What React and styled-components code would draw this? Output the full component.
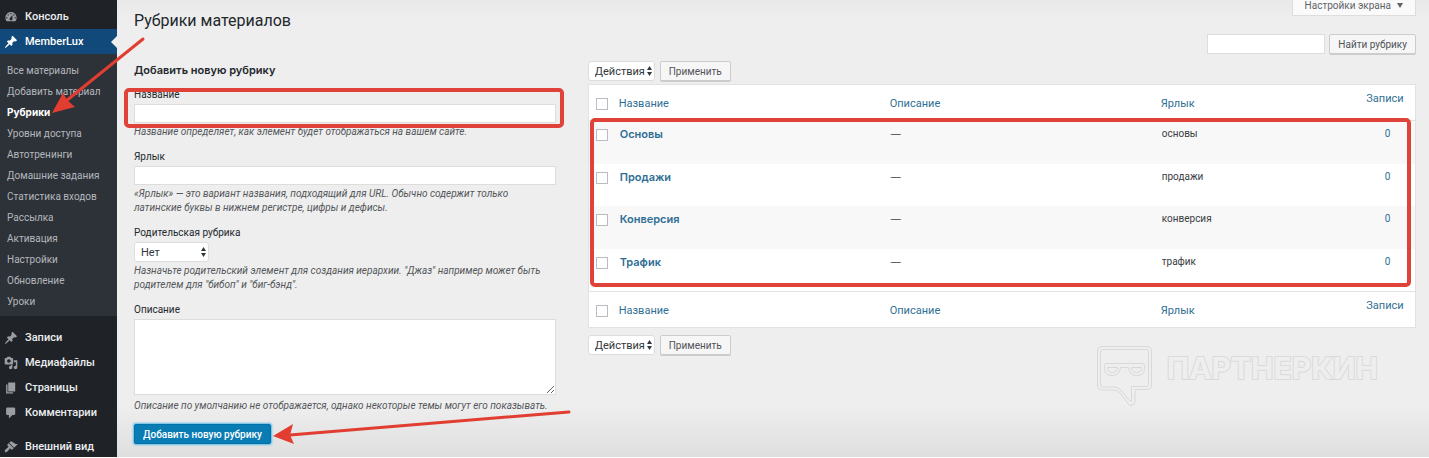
import React from "react";

import styled, { createGlobalStyle, css } from "styled-components";

const GlobalStyle = createGlobalStyle`
  * {
    box-sizing: border-box;
  }

  body {
    margin: 0;
    background: #fdfdfd;
    color: #3c4043;
    font-family: Roboto, "Liberation Sans", sans-serif;
    font-size: 10px;
    line-height: 14px;
  }

  a {
    color: #2f6f94;
    text-decoration: none;
  }

  button,
  input,
  select,
  textarea {
    margin: 0;
    color: inherit;
    font-family: inherit;
  }
`;

const boldFont = `Inter, "Liberation Sans", sans-serif`;

const Page = styled.div`
  position: relative;
  display: flex;
  height: 100vh;
  overflow: hidden;
  border-bottom: 1px solid #fdfdfd;
`;

/* sidebar */

const Sidebar = styled.nav`
  flex: 0 0 117px;
  padding-top: 4px;
  background: #1f2327;
`;

const MenuLink = styled.a`
  position: relative;
  display: flex;
  align-items: center;
  gap: 7px;
  height: 25px;
  margin-top: ${(props) => (props.$spaced ? "9px" : "0")};
  padding-left: 4px;
  background: ${(props) => (props.$active ? "#114a7a" : "transparent")};
  color: ${(props) => (props.$active ? "#fff" : "#eceef0")};
  font-size: 11px;
  font-weight: 500;

  svg {
    width: 14px;
    height: 14px;
    fill: ${(props) => (props.$active ? "#fff" : "#9a9ea2")};
  }

  ${(props) =>
    props.$active &&
    css`
      &::after {
        content: "";
        position: absolute;
        right: 0;
        border: solid 6px transparent;
        border-left-width: 0;
        border-right-color: #eee;
      }
    `}
`;

const SubMenu = styled.div`
  margin-bottom: 9px;
  padding: 6px 0 4px;
  background: #2d3138;
`;

const SubLink = styled.a`
  display: block;
  padding-left: 7px;
  color: ${(props) => (props.$current ? "#fff" : "#b4b8bd")};
  font-family: ${(props) => (props.$current ? boldFont : "inherit")};
  font-weight: ${(props) => (props.$current ? 700 : 400)};
  line-height: 21px;
  white-space: nowrap;
`;

/* content */

const Main = styled.main`
  flex: 1;
  min-width: 0;
  padding: 0 13px 0 17px;
  background: linear-gradient(
    #e9e9e9,
    #eee 20px,
    #eee calc(100% - 52px),
    #dfdfdf
  );
`;

const Header = styled.header`
  display: flex;
  justify-content: space-between;
  align-items: flex-start;
  height: 34px;
`;

const Title = styled.h1`
  margin: 0;
  padding-top: 11px;
  color: #23282d;
  font-size: 16px;
  font-weight: 400;
  line-height: 20px;
`;

const ScreenOptions = styled.button`
  display: flex;
  align-items: center;
  gap: 6px;
  height: 16px;
  padding: 0 12px 4px;
  border: solid 1px #ddd;
  border-top: 0;
  background: #fafafa;
  color: #5f6469;
  font-size: 10px;

  svg {
    width: 6px;
    height: 5px;
    fill: #5f6469;
  }
`;

const Search = styled.form`
  display: flex;
  justify-content: flex-end;
  gap: 4px;
  margin-bottom: 7px;
`;

const TextInput = styled.input`
  display: block;
  width: ${(props) => props.$width || "95%"};
  height: ${(props) => props.$height || "19px"};
  padding: 0 4px;
  border: solid 1px #ddd;
  background: #fff;
  font-size: 10px;
`;

const Button = styled.button`
  height: 20px;
  padding: 0 8px;
  border: solid 1px #ccc;
  border-radius: 2px;
  background: #f6f6f6;
  box-shadow: 0 1px 0 #ccc;
  color: #505459;
  font-size: 10px;
  white-space: nowrap;
`;

const PrimaryButton = styled(Button)`
  border-color: #0073aa;
  background: #0a7cb4;
  box-shadow: 0 0 2px 1px #5fb9e6;
  color: #fff;
  font-weight: 500;
`;

const Columns = styled.div`
  display: flex;
`;

const FormColumn = styled.section`
  flex: 0 0 35%;
  padding: 2px 5px 0 0;
`;

const ListColumn = styled.section`
  flex: 1;
  min-width: 0;
  padding-left: 5px;
`;

const FormTitle = styled.h2`
  margin: 0 0 11px;
  color: #23282d;
  font-family: ${boldFont};
  font-size: 11px;
  font-weight: 600;
  line-height: 14px;
`;

const Field = styled.div`
  position: relative;
  display: flex;
  flex-direction: column;
  align-items: flex-start;
  gap: 2px;
  margin-bottom: 11px;
`;

const Label = styled.label`
  color: #23282d;
`;

const Hint = styled.p`
  margin: 0;
  color: #54575b;
  font-style: italic;
`;

const TextArea = styled.textarea`
  display: block;
  width: 95%;
  height: 76px;
  margin-bottom: 2px;
  border: solid 1px #ddd;
  background: #fff;
  resize: both;
`;

const SelectBox = styled.span`
  position: relative;
  display: block;
  width: ${(props) => props.$width};

  select {
    display: block;
    width: 100%;
    height: 20px;
    padding: 0 6px;
    appearance: none;
    border: solid 1px #ddd;
    border-radius: 3px;
    background: #fff;
    color: #32373c;
    font-size: 11px;
  }

  svg {
    position: absolute;
    top: 5px;
    right: 3px;
    width: 5px;
    height: 10px;
    fill: #32373c;
    pointer-events: none;
  }
`;

const TableNav = styled.div`
  display: flex;
  align-items: center;
  gap: 5px;
  margin: ${(props) => (props.$bottom ? "7px 0 0" : "0 0 3px")};
`;

const TableBox = styled.div`
  position: relative;
`;

const Table = styled.table`
  width: 100%;
  border: solid 1px #e2e2e2;
  border-spacing: 0;
  background: #fff;
  table-layout: fixed;

  th,
  td {
    padding: 6px 8px 0;
    text-align: left;
    vertical-align: top;
    font-weight: 400;
  }

  thead th,
  tfoot th {
    height: 36px;
    padding-top: 12px;
    font-size: 11px;
  }

  thead th {
    border-bottom: solid 1px #e2e2e2;
  }

  tfoot th {
    border-top: solid 1px #e2e2e2;
  }

  thead th:first-child,
  tfoot th:first-child {
    padding-top: 11px;
  }

  thead th:last-child,
  tfoot th:last-child {
    padding: 7px 2px 0 0;
    text-align: center;
  }

  tbody tr {
    height: 43px;
  }

  tbody tr:nth-child(even) {
    height: 42px;
  }

  tbody tr:nth-child(odd) {
    background: #f8f8f9;
  }

  tbody td {
    padding-left: 9px;
  }

  tbody td:last-child {
    padding: 6px 0 0 3px;
    text-align: center;
  }

  tr > :first-child {
    padding-right: 0;
    padding-left: 7px;
  }
`;

const Col = styled.col`
  width: ${(props) => props.$width};
`;

const RowTitle = styled.a`
  font-family: ${boldFont};
  font-size: 11px;
  font-weight: 600;
`;

const Dash = styled.span`
  font-family: ${boldFont};
`;

const Checkbox = styled.input`
  display: block;
  width: 12px;
  height: 12px;
  margin-top: 2px;
  appearance: none;
  border: solid 1px #b9bdc1;
  background: #fff;
`;

/* marks over the content */

const Highlight = styled.div`
  position: absolute;
  inset: ${(props) => props.$inset};
  border: solid 4px #de4238;
  border-radius: 5px;
  pointer-events: none;
`;

const Arrows = styled.svg`
  position: absolute;
  top: 0;
  left: 0;
  width: 600px;
  height: 458px;
  pointer-events: none;
`;

const Watermark = styled.div`
  position: absolute;
  top: 345px;
  right: 51px;
  display: flex;
  gap: 13px;
  pointer-events: none;

  svg {
    width: 58px;
    height: 62px;
    fill: none;
    stroke: #d8d8d8;
  }

  span {
    color: #eee;
    font-family: ${boldFont};
    font-size: 30px;
    font-weight: 700;
    line-height: 46px;
    paint-order: stroke fill;
    -webkit-text-stroke: 2px #dadada;
  }
`;

const icons = {
  dashboard:
    "M3.76 16h12.48c1.1-1.37 1.76-3.11 1.76-5 0-4.42-3.58-8-8-8s-8 3.58-8 8c0 1.89.66 3.63 1.76 5zM10 4c.55 0 1 .45 1 1s-.45 1-1 1-1-.45-1-1 .45-1 1-1zM6 6c.55 0 1 .45 1 1s-.45 1-1 1-1-.45-1-1 .45-1 1-1zm8 0c.55 0 1 .45 1 1s-.45 1-1 1-1-.45-1-1 .45-1 1-1zm-5.37 5.55L12 7v6c0 1.1-.9 2-2 2s-2-.9-2-2c0-.57.24-1.08.63-1.45zM4 10c.55 0 1 .45 1 1s-.45 1-1 1-1-.45-1-1 .45-1 1-1zm12 0c.55 0 1 .45 1 1s-.45 1-1 1-1-.45-1-1 .45-1 1-1z",
  pin:
    "M10.44 3.02l1.82-1.82 6.36 6.35-1.83 1.82c-1.05-.68-2.48-.57-3.41.36l-.75.75c-.92.93-1.04 2.35-.35 3.41l-1.83 1.82-2.41-2.41-2.8 2.79c-.42.42-3.38 2.71-3.8 2.29s1.86-3.39 2.28-3.81l2.79-2.79L4.1 9.36l1.83-1.82c1.05.69 2.48.57 3.4-.36l.75-.75c.93-.92 1.05-2.35.36-3.41z",
  media:
    "M13 11V4c0-.55-.45-1-1-1h-1.67L9 1H5L3.67 3H2c-.55 0-1 .45-1 1v7c0 .55.45 1 1 1h10c.55 0 1-.45 1-1zM7 4.5c1.38 0 2.5 1.12 2.5 2.5S8.38 9.5 7 9.5 4.5 8.38 4.5 7 5.62 4.5 7 4.5zM14 6h5v10.5c0 1.38-1.12 2.5-2.5 2.5S14 17.88 14 16.5s1.12-2.5 2.5-2.5c.17 0 .34.02.5.05V9h-3V6zm-4 8.05V13h2v3.5c0 1.38-1.12 2.5-2.5 2.5S7 17.88 7 16.5 8.12 14 9.5 14c.17 0 .34.02.5.05z",
  page: "M6 15V2h10v13H6zm-1 1h8v2H3V5h2v11z",
  comment:
    "M5 2h9c1.1 0 2 .9 2 2v7c0 1.1-.9 2-2 2h-2l-5 5v-5H5c-1.1 0-2-.9-2-2V4c0-1.1.9-2 2-2z",
  brush:
    "M14.48 11.06L7.41 3.99l1.5-1.5c.5-.56 2.3-.47 3.51.32 1.21.8 1.43 1.28 2.91 2.1 1.18.64 2.45 1.26 4.45.85zm-.71.71L6.7 4.7 4.93 6.47c-.39.39-.39 1.02 0 1.41l1.06 1.06c.39.39.39 1.03 0 1.42-.6.6-1.43 1.11-2.21 1.69-.35.26-.7.53-1.01.84C1.43 14.23.4 16.08 1.4 17.07c.99 1 2.84-.03 4.18-1.36.31-.31.58-.66.85-1.02.57-.78 1.08-1.61 1.69-2.21.39-.39 1.02-.39 1.41 0l1.06 1.06c.39.39 1.02.39 1.41 0z",
};

const subItems = [
  "Все материалы",
  "Добавить материал",
  "Рубрики",
  "Уровни доступа",
  "Автотренинги",
  "Домашние задания",
  "Статистика входов",
  "Рассылка",
  "Активация",
  "Настройки",
  "Обновление",
  "Уроки",
];

const menuItems = [
  { icon: "pin", text: "Записи" },
  { icon: "media", text: "Медиафайлы" },
  { icon: "page", text: "Страницы" },
  { icon: "comment", text: "Комментарии" },
  { icon: "brush", text: "Внешний вид", spaced: true },
];

const columnTitles = ["Название", "Описание", "Ярлык", "Записи"];

const rows = [
  { name: "Основы", slug: "основы", count: 0 },
  { name: "Продажи", slug: "продажи", count: 0 },
  { name: "Конверсия", slug: "конверсия", count: 0 },
  { name: "Трафик", slug: "трафик", count: 0 },
];

const MenuItem = ({ icon, text, active, spaced }) => (
  <MenuLink href="#" $active={active} $spaced={spaced}>
    <svg viewBox="0 0 20 20" aria-hidden="true">
      <path d={icons[icon]} />
    </svg>
    {text}
  </MenuLink>
);

const Select = ({ width, option, ...rest }) => (
  <SelectBox $width={width}>
    <select {...rest}>
      <option>{option}</option>
    </select>
    <svg viewBox="0 0 5 10" aria-hidden="true">
      <path d="M0 4L2.5 0 5 4zM0 6h5L2.5 10z" />
    </svg>
  </SelectBox>
);

const BulkActions = ({ bottom }) => (
  <TableNav $bottom={bottom}>
    <Select width="67px" option="Действия" aria-label="Действия" />
    <Button type="button">Применить</Button>
  </TableNav>
);

const HeadRow = () => (
  <tr>
    <th>
      <Checkbox type="checkbox" aria-label="Выделить все" />
    </th>
    {columnTitles.map((title) => (
      <th key={title}>
        <a href="#">{title}</a>
      </th>
    ))}
  </tr>
);

const AddForm = () => (
  <form>
    <FormTitle>Добавить новую рубрику</FormTitle>
    <Field>
      <Label htmlFor="tag-name">Название</Label>
      <TextInput id="tag-name" type="text" />
      <Hint>
        Название определяет, как элемент будет отображаться на вашем сайте.
      </Hint>
      <Highlight $inset="0 14px 11px -10px" />
    </Field>
    <Field>
      <Label htmlFor="tag-slug">Ярлык</Label>
      <TextInput id="tag-slug" type="text" />
      <Hint>
        «Ярлык» — это вариант названия, подходящий для URL. Обычно содержит
        только
        <br />
        латинские буквы в нижнем регистре, цифры и дефисы.
      </Hint>
    </Field>
    <Field>
      <Label htmlFor="parent">Родительская рубрика</Label>
      <Select id="parent" width="75px" option="Нет" />
      <Hint>
        Назначьте родительский элемент для создания иерархии. "Джаз" например
        может быть
        <br />
        родителем для "бибоп" и "биг-бэнд".
      </Hint>
    </Field>
    <Field>
      <Label htmlFor="tag-description">Описание</Label>
      <TextArea id="tag-description" />
      <Hint>
        Описание по умолчанию не отображается, однако некоторые темы могут его
        показывать.
      </Hint>
    </Field>
    <PrimaryButton type="button">Добавить новую рубрику</PrimaryButton>
  </form>
);

const TermTable = () => (
  <TableBox>
    <Table>
      <colgroup>
        <Col $width="22px" />
        <Col $width="32.8%" />
        <Col $width="32.8%" />
        <Col />
        <Col $width="58px" />
      </colgroup>
      <thead>
        <HeadRow />
      </thead>
      <tbody>
        {rows.map((row) => (
          <tr key={row.slug}>
            <td>
              <Checkbox type="checkbox" aria-label={row.name} />
            </td>
            <td>
              <RowTitle href="#">{row.name}</RowTitle>
            </td>
            <td>
              <Dash>—</Dash>
            </td>
            <td>{row.slug}</td>
            <td>
              <a href="#">{row.count}</a>
            </td>
          </tr>
        ))}
      </tbody>
      <tfoot>
        <HeadRow />
      </tfoot>
    </Table>
    <Highlight $inset="34px 5px 41px 2px" />
  </TableBox>
);

export default class App extends React.Component {
  render() {
    return (
      <Page>
        <GlobalStyle />
        <Sidebar>
          <MenuItem icon="dashboard" text="Консоль" />
          <MenuItem icon="pin" text="MemberLux" active />
          <SubMenu>
            {subItems.map((text) => (
              <SubLink key={text} href="#" $current={text === "Рубрики"}>
                {text}
              </SubLink>
            ))}
          </SubMenu>
          {menuItems.map((item) => (
            <MenuItem key={item.text} {...item} />
          ))}
        </Sidebar>
        <Main>
          <Header>
            <Title>Рубрики материалов</Title>
            <ScreenOptions type="button">
              Настройки экрана
              <svg viewBox="0 0 6 5" aria-hidden="true">
                <path d="M0 0h6L3 5z" />
              </svg>
            </ScreenOptions>
          </Header>
          <Search>
            <TextInput
              type="search"
              aria-label="Найти рубрику"
              $width="118px"
              $height="20px"
            />
            <Button type="button">Найти рубрику</Button>
          </Search>
          <Columns>
            <FormColumn>
              <AddForm />
            </FormColumn>
            <ListColumn>
              <BulkActions />
              <TermTable />
              <BulkActions bottom />
            </ListColumn>
          </Columns>
        </Main>
        <Watermark>
          <svg viewBox="0 0 58 62" aria-hidden="true">
            <path d="M5.5 1.5h46q4 0 4 4v35q0 4-4 4H39v12q0 4-4 4-2 0-3-2L24 48q-3-3-7-3H5.500q-4 0-4-4V5.500q0-4 4-4z" />
            <path d="M6.500 4.500h44q2 0 2 2v33q0 2-2 2H35.500v15q-2 0-3-2L26 46q-4-4-8-4H6.500q-2 0-2-2v-33q0-2 2-2z" />
            <path d="M10.500 18.500h36q2 0 2 2v3q0 7-8 7-7 0-8-8h-8q-1 8-8 8-8 0-8-7v-3q0-2 2-2z" />
            <path d="M11.500 22.500h10q0 5-5 5t-5-5zM35.500 22.500h10q0 5-5 5t-5-5z" />
          </svg>
          <span>ПАРТНЕРКИН</span>
        </Watermark>
        <Arrows viewBox="0 0 600 458" aria-hidden="true">
          <g fill="#e23d31" stroke="#e23d31" strokeLinecap="round">
            <path d="M143 39L66 101" strokeWidth="3" />
            <path d="M52 113L63 93 67 100 75 107z" stroke="none" />
            <path d="M569 412L290 435" strokeWidth="3" />
            <path d="M273 436L293 424 290 435 294 444z" stroke="none" />
          </g>
        </Arrows>
      </Page>
    );
  }
}
